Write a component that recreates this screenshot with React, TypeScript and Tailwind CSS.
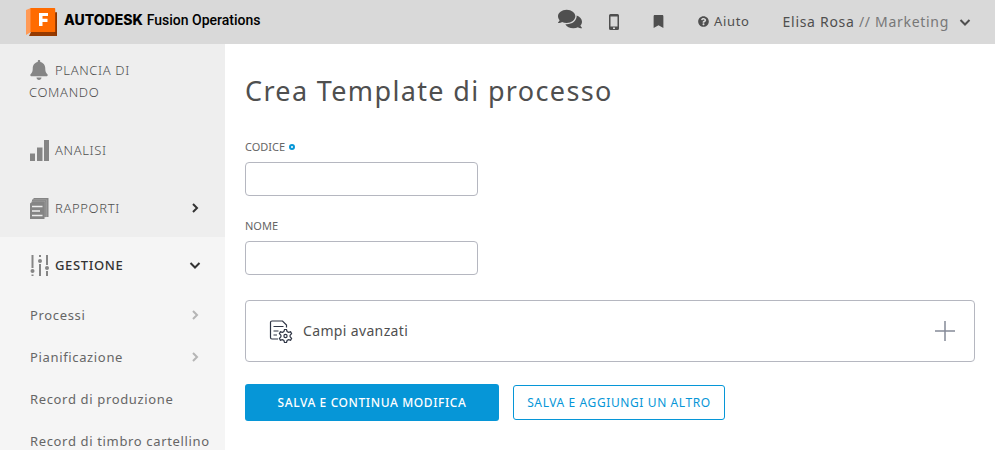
import type { ReactNode } from 'react';
import { FaBell, FaBookmark, FaQuestionCircle, FaComments } from 'react-icons/fa';

function Chevron({ down = false, className = '' }: { down?: boolean; className?: string }) {
  return (
    <svg viewBox="0 0 12 12" aria-hidden="true" className={'size-3 shrink-0 ' + className} fill="none" stroke="currentColor" strokeWidth="2">
      <path d={down ? 'M1.500 4 6 8.500 10.500 4' : 'M4 2 8 6 4 10'} />
    </svg>
  );
}

function Logo() {
  return (
    <svg viewBox="0 0 32 30" aria-hidden="true" className="h-[30px] w-8 shrink-0">
      <path d="M0 3 5 1v24l-5 3z" fill="#ff9a56" />
      <path d="M29 5.500h2v23.500H3l2-4h24z" fill="#963a00" />
      <path d="M28 5.500h3v23.500l-3-4z" fill="#8a3400" />
      <path d="M5 1h23.500a.7.7 0 0 1 .7.7V25H4.500V1.500z" fill="#ff6b00" />
      <path d="M13 6h9v3h-5.500v2.800h5V15h-5v4H13z" fill="#fff" />
    </svg>
  );
}

function BarsIcon() {
  return (
    <svg viewBox="0 0 20 22" aria-hidden="true" className="h-[22px] w-5" fill="#858585">
      <path d="M1 14.500h5V22H1zM8 8.500h5.500V22H8zM15 1h5.500v21h-5.500z" />
    </svg>
  );
}

function ReportsIcon() {
  return (
    <svg viewBox="0 0 20 22" aria-hidden="true" className="h-[22px] w-5">
      <path d="M5 1h14.500v19H3V3z" fill="#858585" />
      <path d="M4 2.800h13.700V20M2 4.500h13.900V21" stroke="#b8b8b8" strokeWidth=".5" fill="none" />
      <path d="M3.500 4.500h12V22H1V6.500z" fill="#858585" />
      <path d="M3 9.500h10.500M3 14h8M3 18.500h10.500" stroke="#eee" strokeWidth="1.500" />
    </svg>
  );
}

function SlidersIcon() {
  return (
    <svg viewBox="0 0 20 22" aria-hidden="true" className="h-[22px] w-5" fill="#858585">
      <path d="M2.500 1h2v13h-2zM2.500 20.500h2V22h-2zM10 1h2v2h-2zM10 10h2v12h-2zM17 1h2v10h-2zM17 17h2v5h-2z" />
      <circle cx="3.500" cy="17" r="2" />
      <circle cx="11" cy="7" r="2" />
      <circle cx="18" cy="14" r="2" />
    </svg>
  );
}

function FormGearIcon() {
  return (
    <svg viewBox="0 0 24 24" aria-hidden="true" className="size-6" fill="none" stroke="#2f3545" strokeWidth="1.200">
      <path d="M9 20H3a1.500 1.500 0 0 1-1.500-1.500v-15A1.500 1.500 0 0 1 3 2h10.500L17.500 6v2.500M4.500 7.500h10M4.500 12h5M4.500 16h3.500" />
      <path d="m15.500 10.500 2 0 .6 2 1.400.8 2.100-.5 1 1.900-1.500 1.500v1.600l1.500 1.500-1 1.900-2.100-.5-1.400.8-.6 2h-2l-.6-2-1.400-.8-2.100.5-1-1.900 1.500-1.500v-1.600l-1.500-1.500 1-1.900 2.100.5 1.400-.8z" />
      <circle cx="16.500" cy="17" r="1.600" />
    </svg>
  );
}

function NavItem({ icon, children, chevron }: { icon: ReactNode; children: ReactNode; chevron?: ReactNode }) {
  return (
    <a href="#" className="flex items-center justify-between">
      <span>
        <span className="-my-2 mr-1.5 inline-block pb-1 align-middle">{icon}</span>
        {children}
      </span>
      {chevron}
    </a>
  );
}

function SubItem({ children, arrow = false }: { children: ReactNode; arrow?: boolean }) {
  return (
    <li>
      <a href="#" className="flex h-[42px] items-center justify-between whitespace-nowrap">
        {children}
        {arrow && <Chevron className="text-[#b5b5b5]" />}
      </a>
    </li>
  );
}

function Field({ id, label, required = false }: { id: string; label: string; required?: boolean }) {
  return (
    <div className="flex flex-col gap-[7px]">
      <label htmlFor={id} className="flex items-center gap-1 text-[11px] leading-4 text-[#666]">
        {label}
        {required && <span className="size-1.5 rounded-full border-2 border-[#0696d7]" />}
      </label>
      <input id={id} type="text" required={required} className="h-[34px] w-[233px] rounded-[4px] border border-[#b5b7c0] bg-white px-2 outline-none" />
    </div>
  );
}

export default function App() {
  return (
    <div className="flex h-screen flex-col overflow-hidden bg-white font-['Noto_Sans','Open_Sans',sans-serif] text-[#4f4f4f]">
      <header className="mr-2 flex h-11 shrink-0 items-center justify-between bg-[#d9d9d9] pr-6 pl-[26px]">
        <a href="#" className="flex items-center gap-1.5 text-black">
          <Logo />
          <span className="flex items-baseline gap-1 pb-1">
            <b className="font-['Inter',sans-serif] text-[14px] font-extrabold">AUTODESK</b>
            <span className="font-['Roboto',sans-serif] text-[14px] font-medium">Fusion Operations</span>
          </span>
        </a>
        <div className="flex items-center pb-px text-[13px] tracking-wider">
          <button type="button" aria-label="Messaggi" className="mr-[27px] pb-1.5"><FaComments className="size-6" /></button>
          <button type="button" aria-label="Dispositivo" className="mr-[33px]">
            <svg viewBox="0 0 10 16" aria-hidden="true" className="h-4 w-2.5"><path fillRule="evenodd" fill="currentColor" d="M1.500 0h7A1.500 1.500 0 0 1 10 1.500v13A1.500 1.500 0 0 1 8.500 16h-7A1.500 1.500 0 0 1 0 14.500v-13A1.500 1.500 0 0 1 1.500 0zM1.500 2.500v10h7v-10zM4 13.500v1.500h2v-1.500z" /></svg>
          </button>
          <button type="button" aria-label="Segnalibri" className="mr-[33px]"><FaBookmark className="size-[13px]" /></button>
          <a href="#" className="mr-[33px] flex items-center gap-[5px]"><FaQuestionCircle className="size-[11px]" />Aiuto</a>
          <button type="button" className="flex items-center gap-2.5 text-[14px] tracking-wider"><span>Elisa Rosa <span className="text-[#777]">// Marketing</span></span><Chevron down /></button>
        </div>
      </header>
      <div className="flex min-h-0 flex-1">
        <nav className="w-[225px] shrink-0 bg-[#eee] text-[13px] leading-[22px] tracking-wider">
          <div className="flex h-[193px] flex-col gap-9 pt-[15px] pr-6 pl-[29px] font-light">
            <div className="w-32"><NavItem icon={<FaBell className="size-5 text-[#858585]" />}>PLANCIA DI COMANDO</NavItem></div>
            <NavItem icon={<BarsIcon />}>ANALISI</NavItem>
            <NavItem icon={<ReportsIcon />} chevron={<Chevron className="text-[#333]" />}>RAPPORTI</NavItem>
          </div>
          <div className="h-full bg-[#f5f5f5] pt-[17px] pr-6 pl-[29px]">
            <div className="mb-[18px] font-medium text-[#333]">
              <NavItem icon={<SlidersIcon />} chevron={<Chevron down />}>GESTIONE</NavItem>
            </div>
            <ul className="pl-px text-[#666]">
              <SubItem arrow>Processi</SubItem>
              <SubItem arrow>Pianificazione</SubItem>
              <SubItem>Record di produzione</SubItem>
              <SubItem>Record di timbro cartellino</SubItem>
            </ul>
          </div>
        </nav>
        <main className="flex-1 pt-[30px] pr-7 pl-5">
          <h1 className="mb-[31px] text-[27px] leading-[34px] tracking-wider">Crea Template di processo</h1>
          <form className="flex flex-col">
            <div className="mb-[25px] flex flex-col gap-[22px]">
              <Field id="codice" label="CODICE" required />
              <Field id="nome" label="NOME" />
            </div>
            <button type="button" className="mb-[22px] flex h-[62px] items-center gap-2.5 rounded-[4px] border border-[#b5b7c0] pr-[19px] pl-[23px] text-[14px] tracking-wide">
              <FormGearIcon />
              <span className="pb-0.5">Campi avanzati</span>
              <svg viewBox="0 0 20 20" aria-hidden="true" className="ml-auto size-5" stroke="#858a98"><path d="M0 10h20M10 0v20" strokeWidth="1.500" /></svg>
            </button>
            <div className="flex items-center gap-3.5 text-[12px] tracking-wider">
              <button type="submit" className="h-[37px] w-[254px] rounded-[3px] bg-[#0696d7] pt-px font-medium text-white">SALVA E CONTINUA MODIFICA</button>
              <button type="submit" className="h-[35px] w-[212px] rounded-[3px] border border-[#0696d7] pt-px whitespace-nowrap text-[#0696d7]">SALVA E AGGIUNGI UN ALTRO</button>
            </div>
          </form>
        </main>
      </div>
    </div>
  );
}
